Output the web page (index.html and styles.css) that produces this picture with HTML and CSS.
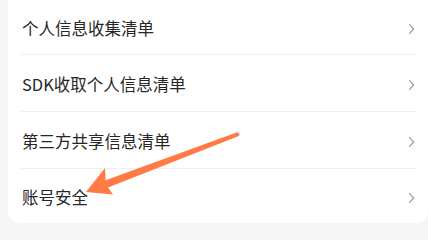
FILE: index.html
```html
<!DOCTYPE html>
<html lang="zh-CN">
<head>
<meta charset="utf-8">
<title>设置</title>
<link rel="stylesheet" href="styles.css">
</head>
<body>
<div class="page">
  <div class="card">
    <div class="row row-first">
      <span class="label">个人信息收集清单</span>
      <svg class="chev" width="7" height="12" viewBox="0 0 7 12"><path d="M1.2 1.2 L5.6 6 L1.2 10.8" fill="none" stroke="#9a9a9a" stroke-width="1.2"/></svg>
    </div>
    <div class="row">
      <span class="label">SDK收取个人信息清单</span>
      <svg class="chev" width="7" height="12" viewBox="0 0 7 12"><path d="M1.2 1.2 L5.6 6 L1.2 10.8" fill="none" stroke="#9a9a9a" stroke-width="1.2"/></svg>
    </div>
    <div class="row">
      <span class="label">第三方共享信息清单</span>
      <svg class="chev" width="7" height="12" viewBox="0 0 7 12"><path d="M1.2 1.2 L5.6 6 L1.2 10.8" fill="none" stroke="#9a9a9a" stroke-width="1.2"/></svg>
    </div>
    <div class="row row-last">
      <span class="label">账号安全</span>
      <svg class="chev" width="7" height="12" viewBox="0 0 7 12"><path d="M1.2 1.2 L5.6 6 L1.2 10.8" fill="none" stroke="#9a9a9a" stroke-width="1.2"/></svg>
    </div>
  </div>
  <svg class="arrow" width="428" height="226" viewBox="0 0 428 226">
    <polygon points="237.2,132.2 105.6,180.2 105,168 86,192 113,194.5 108,187.4 238.8,136 239.6,134" fill="#ff7a45"/>
  </svg>
</div>
</body>
</html>
```

FILE: styles.css
```css
html, body {
  margin: 0;
  padding: 0;
  background: #f6f6f6;
}
.page {
  position: relative;
  width: 428px;
  height: 226px;
  overflow: hidden;
  font-family: "Noto Sans CJK SC", "Noto Sans", sans-serif;
}
.card {
  margin-left: 8px;
  width: 420px;
  background: #ffffff;
  border-radius: 0 0 12px 12px;
  box-sizing: border-box;
  padding: 0 12px 0 13px;
}
.row {
  display: flex;
  align-items: center;
  justify-content: space-between;
  height: 57px;
  box-sizing: border-box;
  border-top: 1px solid #f0f0f0;
  padding: 3px 1px 0 1px;
}
.row-first {
  height: 54px;
  border-top: none;
}
.row-last {
  height: 55px;
}
.label {
  font-size: 16.5px;
  color: #262626;
  line-height: 1;
}
.chev {
  display: block;
  margin-right: 0;
}
.arrow {
  position: absolute;
  left: 0;
  top: 0;
  pointer-events: none;
}
```
